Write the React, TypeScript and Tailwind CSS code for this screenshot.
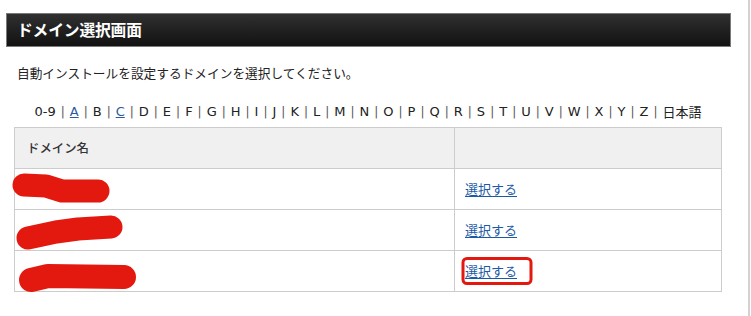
const LETTERS = ['A','B','C','D','E','F','G','H','I','J','K','L','M','N','O','P','Q','R','S','T','U','V','W','X','Y','Z'];
const LINKED = ['A', 'C'];

export default function App() {
  const rows = [1, 2, 3];

  return (
    <div className="relative w-[751px] h-[316px] bg-white overflow-hidden" style={{ fontFamily: '"Noto Sans CJK JP", "Noto Sans", sans-serif' }}>
      <div className="w-[750px] h-[316px] border-r-2 border-[#d2d2d2]">
        <div className="pt-[13px] pl-[6px]">
          <div className="w-[725px] h-[34px] border border-[#7a7a7a] bg-gradient-to-b from-[#303030] to-[#121212] flex items-center pl-[10px]">
            <h1 className="text-white font-bold text-[15.8px] leading-none tracking-[-0.2px]">ドメイン選択画面</h1>
          </div>
        </div>

        <p className="ml-[17px] mt-[17px] text-[12.7px] leading-[18px] text-[#222]">
          自動インストールを設定するドメインを選択してください。
        </p>

        <div className="w-[708px] ml-[14px] mt-[21px]">
          <div className="flex justify-center items-center h-[18px] text-[13px] text-[#222]" style={{ fontFamily: '"DejaVu Sans", "Noto Sans CJK JP", sans-serif' }}>
            <span>0-9</span>
            {LETTERS.map(l => (
              <span key={l} className="flex items-center">
                <span className="text-[#555] px-[5px] text-[12px]">|</span>
                {LINKED.includes(l)
                  ? <a href="#" className="text-[#2a5a9c] underline">{l}</a>
                  : <span>{l}</span>}
              </span>
            ))}
            <span className="text-[#555] px-[5px] text-[12px]">|</span>
            <span style={{ fontFamily: '"Noto Sans CJK JP", sans-serif' }}>日本語</span>
          </div>

          <table className="w-[708px] mt-[6px] border-collapse text-[13px]">
            <thead>
              <tr className="h-[41px] bg-[#f0f0f0]">
                <th className="w-[440px] border border-[#cccccc] text-left font-medium pl-[12px] text-[12.4px] text-[#333]">ドメイン名</th>
                <th className="border border-[#cccccc]"></th>
              </tr>
            </thead>
            <tbody>
              {rows.map(r => (
                <tr key={r} className="h-[41px]">
                  <td className="border border-[#cccccc]"></td>
                  <td className="border border-[#cccccc] pl-[10px]">
                    <a href="#" className="text-[#1d5aa6] underline underline-offset-2">選択する</a>
                  </td>
                </tr>
              ))}
            </tbody>
          </table>
        </div>
      </div>

      {/* redaction scribbles and highlight */}
      <svg className="absolute left-0 top-0 pointer-events-none" width="751" height="316" viewBox="0 0 751 316">
        <g stroke="#e3190f" strokeLinecap="round" strokeLinejoin="round" fill="none">
          <path d="M24 185 L46 186 L62 191 L98 191" strokeWidth="23" />
          <path d="M28 238 L56 232 L78 229 L111 227" strokeWidth="23" />
          <path d="M31 280 L48 276 L124 277" strokeWidth="24" />
          <rect x="463" y="258.5" width="68" height="25" rx="4" strokeWidth="3" />
        </g>
      </svg>
    </div>
  );
}
